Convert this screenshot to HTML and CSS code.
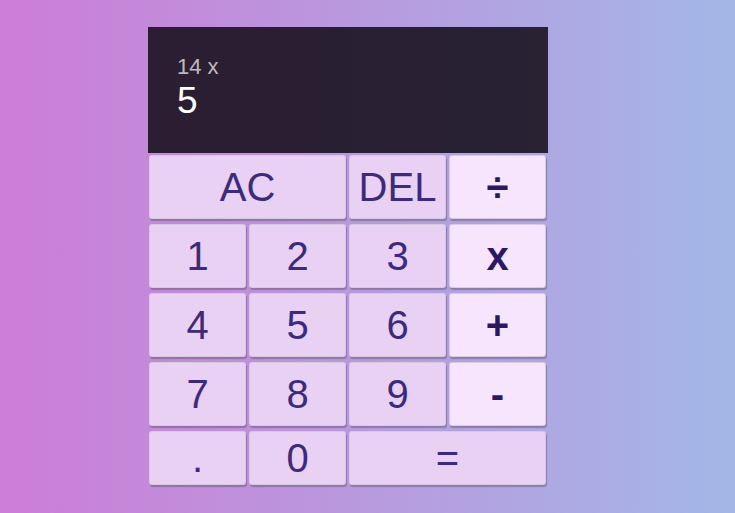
FILE: index.html
```html
<!DOCTYPE html>
<html>
<head>
<meta charset="utf-8">
<link rel="stylesheet" href="styles.css">
</head>
<body>
<div class="calculator">
  <div class="output">
    <div class="previous">14 x</div>
    <div class="current">5</div>
  </div>
  <button class="key span-two">AC</button>
  <button class="key">DEL</button>
  <button class="key op">÷</button>
  <button class="key">1</button>
  <button class="key">2</button>
  <button class="key">3</button>
  <button class="key op">x</button>
  <button class="key">4</button>
  <button class="key">5</button>
  <button class="key">6</button>
  <button class="key op">+</button>
  <button class="key">7</button>
  <button class="key">8</button>
  <button class="key">9</button>
  <button class="key op">-</button>
  <button class="key">.</button>
  <button class="key">0</button>
  <button class="key span-two">=</button>
</div>
</body>
</html>
```
FILE: styles.css
```css
* { box-sizing: border-box; }
html, body { margin: 0; padding: 0; }
body {
  width: 735px;
  height: 513px;
  overflow: hidden;
  background: linear-gradient(to right, #cd7dd6, #a3b7e7);
  font-family: "Liberation Sans", Arial, sans-serif;
}
.calculator {
  display: grid;
  margin-left: 148px;
  padding-top: 27px;
  grid-template-columns: repeat(4, 100px);
  grid-template-rows: 126px repeat(4, 69px) 59px;
}
.output {
  grid-column: 1 / -1;
  background: rgba(18, 12, 22, 0.86);
  padding: 29px 29px 0;
  color: #fff;
}
.previous {
  font-size: 22px;
  line-height: 22px;
  color: rgba(255, 255, 255, 0.7);
}
.current {
  margin-top: 3px;
  font-size: 37px;
  line-height: 40px;
}
.key {
  margin: 2px 2px 3px 1px;
  border: 1px solid rgba(215, 200, 225, 0.95);
  border-radius: 3px;
  box-shadow: 1px 2px 1px rgba(90, 80, 100, 0.45);
  background: #e9d1f3;
  color: #3c2a7e;
  font-family: "Liberation Sans", Arial, sans-serif;
  font-size: 40px;
  padding: 0;
  line-height: 1;
}
.key.op {
  background: #f6e5fc;
  color: #2a1866;
  font-weight: bold;
}
.span-two { grid-column: span 2; }
```
